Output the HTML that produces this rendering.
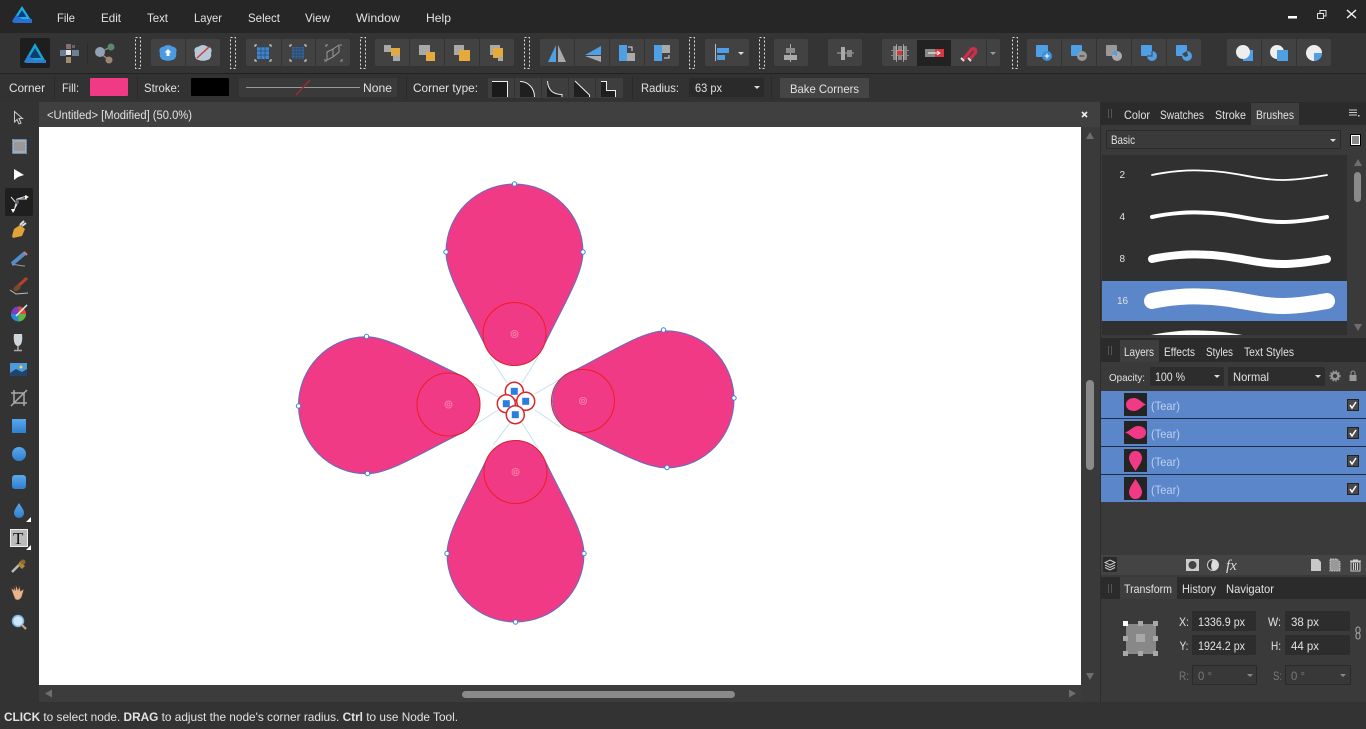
<!DOCTYPE html>
<html><head><meta charset="utf-8"><title>Affinity Designer</title>
<style>
html,body{margin:0;padding:0;width:1366px;height:729px;overflow:hidden;background:#333}
svg{display:block}
text{font-family:"Liberation Sans",sans-serif;font-size:12px;fill:#e2e2e2}
.b{fill:#424242}
.d{stroke:#333;stroke-width:1}
.g{fill:none;stroke:#ddd;stroke-width:1;stroke-dasharray:2 2}
</style></head><body>
<svg width="1366" height="729" viewBox="0 0 1366 729" xmlns="http://www.w3.org/2000/svg">
<defs>
<path id="petal" d="M514.500 184C552 184 583 214 583 252C583 274 565 302 542.700 348A31.500 31.500 0 0 1 486.300 348C464 302 446 274 446 252C446 214 477 184 514.500 184Z"/>
<linearGradient id="bl" x1="0" y1="0" x2="0" y2="1"><stop offset="0" stop-color="#5aa8ea"/><stop offset="1" stop-color="#2f7fd0"/></linearGradient>
</defs>

<!-- backgrounds -->
<rect width="1366" height="729" fill="#333"/>
<rect width="1366" height="33" fill="#262626"/>
<rect y="33" width="1366" height="41" fill="#343434"/>
<rect y="73" width="1366" height="1" fill="#222"/>
<rect y="74" width="1366" height="27" fill="#323232"/>
<rect x="0" y="101" width="39" height="601" fill="#333"/>
<rect x="39" y="102" width="1061" height="25" fill="#404040"/>
<rect x="39" y="127" width="1042" height="558" fill="#fff"/>
<rect x="39" y="685" width="1042" height="17" fill="#3c3c3c"/>
<rect x="1081" y="127" width="19" height="575" fill="#3a3a3a"/>
<rect x="1100" y="102" width="266" height="600" fill="#3a3a3a"/>

<!-- menu -->
<path d="M22 6L31 20H13Z" fill="#18b4e4"/><path d="M22 10L17.500 17H26.500Z" fill="#0d3a80"/><path d="M12 21L16 15L22 19H32V23H14Z" fill="#2a6fd6"/>
<text x="57" y="22" textLength="18" lengthAdjust="spacingAndGlyphs">File</text>
<text x="101" y="22" textLength="20" lengthAdjust="spacingAndGlyphs">Edit</text>
<text x="147" y="22" textLength="21" lengthAdjust="spacingAndGlyphs">Text</text>
<text x="194" y="22" textLength="28" lengthAdjust="spacingAndGlyphs">Layer</text>
<text x="248" y="22" textLength="32" lengthAdjust="spacingAndGlyphs">Select</text>
<text x="305" y="22" textLength="25" lengthAdjust="spacingAndGlyphs">View</text>
<text x="356" y="22" textLength="44" lengthAdjust="spacingAndGlyphs">Window</text>
<text x="426" y="22" textLength="25" lengthAdjust="spacingAndGlyphs">Help</text>
<rect x="1288" y="16" width="9" height="2.500" fill="#fff"/>
<path d="M1317.500 13.500h6v5h-6zM1320 13V10.500h6V16h-2.500" fill="none" stroke="#ddd"/>
<path d="M1347 10L1356 18M1356 10L1347 18" stroke="#eee" stroke-width="1.500"/>

<!-- toolbar: persona -->
<rect x="20" y="38" width="30" height="30" rx="2" fill="#1e1e1e"/>
<path d="M35 43L46 62H24Z" fill="#14a5d6"/><path d="M35 48L29 58H41Z" fill="#0e3c6e"/><path d="M24 62L28 55L34 60H46V63H26Z" fill="#2d7dd0"/>
<g fill="#8a8a8a"><rect x="60" y="50" width="6" height="6" fill="#6b7f95"/><rect x="72" y="50" width="7" height="6" fill="#6b7f95"/><rect x="66" y="44" width="5" height="5" fill="#8a6a78"/><rect x="66" y="50" width="5" height="5" fill="#e8e8e8"/><rect x="66" y="57" width="5" height="6" fill="#a08a70"/><rect x="72" y="45" width="3" height="3" fill="#666"/></g>
<rect x="87" y="43" width="1" height="21" fill="#2a2a2a"/>
<path d="M100 52L111 47M100 53L109 60" stroke="#888" stroke-width="1.500"/><circle cx="100" cy="52" r="5" fill="#8fa3b5"/><circle cx="111" cy="47" r="3.500" fill="#5a8a6a"/><circle cx="109" cy="60" r="3.500" fill="#9a8672"/>

<!-- grabbers -->
<rect x="135.500" y="37.500" width="5" height="31" class="g"/>
<rect x="230.500" y="37.500" width="5" height="31" class="g"/>
<rect x="360.500" y="37.500" width="5" height="31" class="g"/>
<rect x="524.500" y="37.500" width="5" height="31" class="g"/>
<rect x="689.500" y="37.500" width="5" height="31" class="g"/>
<rect x="759.500" y="37.500" width="5" height="31" class="g"/>
<rect x="1012.500" y="37.500" width="5" height="31" class="g"/>

<!-- groups -->
<rect x="151" y="39" width="69" height="27" rx="2" class="b"/>
<rect x="246" y="39" width="104" height="27" rx="2" class="b"/>
<rect x="375" y="39" width="139" height="27" rx="2" class="b"/>
<rect x="540" y="39" width="139" height="27" rx="2" class="b"/>
<rect x="705" y="39" width="44" height="27" rx="2" class="b"/>
<rect x="774" y="39" width="34" height="27" rx="2" class="b"/>
<rect x="828" y="39" width="34" height="27" rx="2" class="b"/>
<rect x="882" y="39" width="118" height="27" rx="2" class="b"/>
<rect x="917" y="40" width="34" height="26" fill="#222"/>
<rect x="1027" y="39" width="174" height="27" rx="2" class="b"/>
<rect x="1227" y="39" width="104" height="27" rx="2" class="b"/>
<path class="d" d="M185.500 39v27M281.500 39v27M315.500 39v27M409.500 39v27M444.500 39v27M479.500 39v27M574.500 39v27M609.500 39v27M644.500 39v27M986.500 39v27M1061.500 39v27M1096.500 39v27M1131.500 39v27M1166.500 39v27M1261.500 39v27M1296.500 39v27"/>

<!-- group 1 -->
<path d="M168 45C171 45 172 47 174 47C177 48 177 51 176 53C177 56 175 60 172 60C170 61 166 61 164 60C161 60 159 56 160 53C159 51 159 48 162 47C164 47 165 45 168 45Z" fill="#4a9be0"/><path d="M168 49L171.500 52.500H169.500V56H166.500V52.500H164.500Z" fill="#fff"/>
<path d="M203 45C206 45 207 47 209 47C212 48 212 51 211 53C212 56 210 60 207 60C205 61 201 61 199 60C196 60 194 56 195 53C194 51 194 48 197 47C199 47 200 45 203 45Z" fill="#b9c8d8"/><path d="M197 58L209 47" stroke="#d23b3b" stroke-width="1.500"/>

<!-- group 2 -->
<rect x="257" y="47" width="12" height="12" fill="#3f86cf"/>
<path d="M257 47h12M257 51h12M257 55h12M261 47v12M265 47v12" stroke="#2b4b70" stroke-width="0.700"/>
<path d="M255 47v-2h2M269 45h2v2M271 59v2h-2M257 61h-2v-2" stroke="#ddd" fill="none"/>
<rect x="292" y="47" width="12" height="12" fill="#36679c"/>
<path d="M292 49h12M292 52h12M292 55h12M292 58h12M295 47v12M298 47v12M301 47v12" stroke="#2a4058" stroke-width="0.700"/>
<path d="M290 47v-2h2M304 45h2v2M306 59v2h-2M292 61h-2v-2" stroke="#ddd" fill="none"/>
<path d="M327 52l6-3v8l-6 3zM333 49l6-4v7l-6 5M326 47v-2h2M340 45h2M342 59v2h-2M327 61h-2v-2" fill="none" stroke="#999"/>

<!-- group 3 -->
<rect x="384" y="45" width="7" height="7" fill="#a9a9a9"/><rect x="391" y="48" width="9" height="8" fill="#e6a93c"/><rect x="393" y="55" width="7" height="6" fill="#a9a9a9"/>
<rect x="419" y="45" width="11" height="10" fill="#a9a9a9"/><rect x="426" y="52" width="9" height="9" fill="#e6a93c"/>
<rect x="454" y="45" width="10" height="10" fill="#a9a9a9"/><rect x="459" y="50" width="11" height="11" fill="#e6a93c"/>
<rect x="490" y="45" width="10" height="10" fill="#a9a9a9"/><rect x="493" y="48" width="10" height="10" fill="#e6a93c"/><rect x="498" y="57" width="5" height="4" fill="#a9a9a9"/>

<!-- group 4 -->
<path d="M556 45V62H548Z" fill="#4f9fe6"/><path d="M558 45V62H566Z" fill="#aaa"/>
<path d="M601 46V55H585Z" fill="#4f9fe6"/><path d="M601 56V62L585 56Z" fill="#aaa"/>
<rect x="619" y="45" width="8" height="16" fill="#4f9fe6"/><rect x="627" y="53" width="8" height="8" fill="#aaa"/><path d="M628 47h4v4" fill="none" stroke="#ddd"/>
<rect x="654" y="45" width="8" height="16" fill="#4f9fe6"/><rect x="662" y="45" width="8" height="8" fill="#aaa"/><path d="M669 55v3h-5" fill="none" stroke="#ddd"/>

<!-- group 5-7 -->
<path d="M715.500 44v17" stroke="#bbb"/><rect x="717" y="48" width="12" height="5" fill="#4f9fe6"/><rect x="717" y="55" width="8" height="5" fill="#4f9fe6"/>
<path d="M738 52h6l-3 3z" fill="#ddd"/>
<path d="M790.500 44v18" stroke="#aaa"/><rect x="786" y="48" width="9" height="5" fill="#8a8a8a"/><rect x="784" y="55" width="13" height="5" fill="#aaa"/>
<path d="M837 53h17" stroke="#aaa"/><rect x="841" y="47" width="4" height="13" fill="#aaa"/><rect x="847" y="50" width="5" height="7" fill="#8a8a8a"/>

<!-- group 8 -->
<g fill="#888"><rect x="893" y="46" width="4" height="4"/><rect x="898" y="46" width="4" height="4"/><rect x="903" y="46" width="4" height="4"/><rect x="893" y="51" width="4" height="4"/><rect x="903" y="51" width="4" height="4"/><rect x="893" y="56" width="4" height="4"/><rect x="898" y="56" width="4" height="4"/><rect x="903" y="56" width="4" height="4"/></g>
<rect x="897" y="50" width="5" height="5" fill="#d23b3b"/>
<path d="M891 50.500h18M891 55.500h18M896.500 44v18M903.500 44v18" stroke="#ccc" stroke-width="0.600"/>
<rect x="925" y="49" width="10" height="8" fill="#888"/><rect x="935" y="49" width="9" height="8" fill="#e0343f"/><path d="M928 53h11M937 51l3 2-3 2" fill="none" stroke="#fff"/>
<path d="M963 60L971 50C974 47 977 50 975 53L969 60" fill="none" stroke="#c8304a" stroke-width="3.500"/>
<path d="M961 58l3 3M968 58l3 3" stroke="#ddd" stroke-width="2"/>
<path d="M990 52h6l-3 3z" fill="#999"/>

<!-- group 9 -->
<rect x="1036" y="45" width="12" height="12" rx="1" fill="#4f9fe6"/><circle cx="1047" cy="56" r="5" fill="#3d8fd8"/><path d="M1044.500 56h5M1047 53.500v5" stroke="#fff"/>
<rect x="1071" y="45" width="11" height="11" rx="1" fill="#4f9fe6"/><circle cx="1082" cy="56" r="5" fill="#999"/><path d="M1079.500 56h5" stroke="#333"/>
<rect x="1106" y="45" width="11" height="11" rx="1" fill="#999"/><circle cx="1117" cy="56" r="5" fill="#aaa"/><path d="M1112 54A5 5 0 0 1 1117 51V56H1117Z" fill="#4f9fe6"/>
<rect x="1141" y="45" width="11" height="11" rx="1" fill="#4f9fe6"/><circle cx="1152" cy="56" r="5" fill="#4f9fe6"/><path d="M1147 56h5v-5" fill="none" stroke="#444"/>
<rect x="1176" y="45" width="11" height="11" rx="1" fill="#4f9fe6"/><circle cx="1187" cy="56" r="5" fill="#4f9fe6"/><path d="M1182 54l5-3 1 5-3 1z" fill="#444"/>

<!-- group 10 -->
<rect x="1243" y="50" width="10" height="11" fill="#4f9fe6"/><circle cx="1243" cy="52" r="7" fill="#eee"/>
<circle cx="1277" cy="52" r="7" fill="#eee"/><rect x="1277" y="50" width="11" height="11" fill="#4f9fe6"/>
<circle cx="1314" cy="53" r="8" fill="#eee"/><path d="M1314 53h8A8 8 0 0 1 1314 61Z" fill="#4f9fe6"/>

<!-- context bar -->
<text x="9" y="92" textLength="36" lengthAdjust="spacingAndGlyphs">Corner</text>
<rect x="54" y="76" width="1" height="23" fill="#2a2a2a"/>
<text x="62" y="92" textLength="17" lengthAdjust="spacingAndGlyphs">Fill:</text>
<rect x="90" y="78" width="38" height="18" rx="1" fill="#f13a86"/>
<rect x="137" y="76" width="1" height="23" fill="#2a2a2a"/>
<text x="144" y="92" textLength="36" lengthAdjust="spacingAndGlyphs">Stroke:</text>
<rect x="191" y="78" width="38" height="18" rx="1" fill="#000"/>
<rect x="239" y="78" width="158" height="19" rx="1" fill="#3a3a3a"/>
<path d="M246 87.500H360" stroke="#999"/><path d="M296 95L310 80" stroke="#9c2a33" stroke-width="1.500"/>
<text x="363" y="92" textLength="29" lengthAdjust="spacingAndGlyphs">None</text>
<rect x="406" y="76" width="1" height="23" fill="#2a2a2a"/>
<text x="413" y="92" textLength="65" lengthAdjust="spacingAndGlyphs">Corner type:</text>
<rect x="488" y="78" width="135" height="20" fill="#3e3e3e"/>
<path d="M514.500 78v20M541.500 78v20M568.500 78v20M595.500 78v20" stroke="#333"/>
<path d="M492 81H507V97H492Z" fill="#1a1a1a"/><path d="M492 81.500H507.500V97" fill="none" stroke="#eee"/>
<path d="M520 81C528 81 534 88 534 97H520Z" fill="#1f1f1f"/><path d="M520 81.500C528 81.500 534.500 88 534.500 97" fill="none" stroke="#eee"/>
<path d="M547 81C548 90 553 95 562 95V97H547Z" fill="#1f1f1f"/><path d="M547.500 81C548 90 553 94.500 562 94.500V97" fill="none" stroke="#eee"/>
<path d="M574 81L589 95V97H574Z" fill="#1f1f1f"/><path d="M575 81L589.500 95V97" fill="none" stroke="#eee"/>
<path d="M601 81H606V90H616V97H601Z" fill="#1f1f1f"/><path d="M601 81.500H606.500V90.500H615.500V97" fill="none" stroke="#eee"/>
<rect x="632" y="76" width="1" height="23" fill="#2a2a2a"/>
<text x="641" y="92" textLength="38" lengthAdjust="spacingAndGlyphs">Radius:</text>
<rect x="689" y="78" width="75" height="19" rx="1" fill="#2a2a2a"/>
<text x="695" y="92" textLength="27" lengthAdjust="spacingAndGlyphs">63 px</text>
<path d="M754 86h6l-3 3z" fill="#ddd"/>
<rect x="771" y="76" width="1" height="23" fill="#2a2a2a"/>
<rect x="780" y="78" width="89" height="20" rx="1" fill="#454545"/>
<text x="790" y="93" textLength="69" lengthAdjust="spacingAndGlyphs">Bake Corners</text>

<!-- doc tab -->
<text x="47" y="119" textLength="145" lengthAdjust="spacingAndGlyphs" style="font-size:11.500px">&lt;Untitled&gt; [Modified] (50.0%)</text>
<path d="M1082 112l5 5M1087 112l-5 5" stroke="#eee" stroke-width="1.600"/>

<!-- canvas -->
<g fill="#f13a86" stroke="#5f6fc4" stroke-width="1">
<use href="#petal"/>
<use href="#petal" transform="translate(1 806) scale(1 -1)"/>
<use href="#petal" transform="translate(298.500 406) rotate(-90.600) translate(-514.500 -184)"/>
<use href="#petal" transform="translate(734 398) rotate(88.860) translate(-514.500 -184)"/>
</g>
<path d="M490 357L507 383M538 357L522 383M473 383L498 397M473 426L498 410M562 378L535 394M560 427L535 410M493 445L510 423M538 448L522 423" stroke="#c5dff2" stroke-width="1" fill="none"/>
<g fill="none" stroke="#ee1c25" stroke-width="1">
<circle cx="514.500" cy="334" r="31.500"/><circle cx="515.500" cy="472" r="31.500"/><circle cx="448.500" cy="404.500" r="31.500"/><circle cx="583" cy="401" r="31.500"/>
</g>
<g fill="none" stroke="#f77ba8" stroke-width="1">
<circle cx="514.500" cy="334" r="3.500"/><circle cx="515.500" cy="472" r="3.500"/><circle cx="448.500" cy="404.500" r="3.500"/><circle cx="583" cy="401" r="3.500"/>
<circle cx="514.500" cy="334" r="1.500"/><circle cx="515.500" cy="472" r="1.500"/><circle cx="448.500" cy="404.500" r="1.500"/><circle cx="583" cy="401" r="1.500"/>
</g>
<g fill="#fff" stroke="#d9252d" stroke-width="1.500">
<circle cx="514.300" cy="391.300" r="9"/><circle cx="525.700" cy="401.300" r="9"/><circle cx="506.300" cy="403.700" r="9"/><circle cx="515.300" cy="414.700" r="9"/>
</g>
<g fill="#2a7de1">
<rect x="510.800" y="387.800" width="7" height="7"/><rect x="522.200" y="397.800" width="7" height="7"/><rect x="502.800" y="400.200" width="7" height="7"/><rect x="511.800" y="411.200" width="7" height="7"/>
</g>
<g fill="#fff" stroke="#3b82d6" stroke-width="1">
<circle cx="514.500" cy="184" r="2.200"/><circle cx="446" cy="252" r="2.200"/><circle cx="583" cy="252" r="2.200"/>
<circle cx="298.500" cy="406" r="2.200"/><circle cx="366.500" cy="336.500" r="2.200"/><circle cx="367.500" cy="473.500" r="2.200"/>
<circle cx="734" cy="398" r="2.200"/><circle cx="663.500" cy="330" r="2.200"/><circle cx="667" cy="467.500" r="2.200"/>
<circle cx="515.500" cy="622" r="2.200"/><circle cx="447" cy="553.500" r="2.200"/><circle cx="584" cy="553.500" r="2.200"/>
</g>

<!-- canvas scrollbars -->
<rect x="462" y="691" width="273" height="7" rx="3.500" fill="#8a8a8a"/>
<path d="M45 693.500l7-4v8zM1076 693.500l-7-4v8z" fill="#6e6e6e"/>
<rect x="1086" y="380" width="8" height="90" rx="4" fill="#8a8a8a"/>
<path d="M1090 132l4 7h-8zM1090 680l4-7h-8z" fill="#6e6e6e"/>

<!-- tools -->
<path d="M14.500 111.500V122L17 119.500L19 124L21 123L19 118.500H22.500Z" fill="#333" stroke="#ccc"/>
<rect x="12.500" y="139.500" width="14" height="14" fill="#aaa" stroke="#5a9bd8" stroke-dasharray="2 1"/><rect x="14" y="142" width="11" height="9" fill="#999"/>
<path d="M14 169V180L18 177L24 175Z" fill="#fff"/>
<rect x="5" y="188" width="28" height="28" rx="2" fill="#1f1f1f"/>
<path d="M11 197L17 204M27 196L17 199L14 211M17 204L13 212M17 199H27" stroke="#ddd" fill="none"/><circle cx="17" cy="202" r="2" fill="#667"/><path d="M25 195l4 2-4 2zM11 209l4 0-2 4z" fill="#fff"/>
<path d="M12 236L14 229L20 225L25 229L22 236L13 238Z" fill="#e2a23a"/><path d="M20 225L24 221M22 226L26 223" stroke="#ddd" stroke-width="2"/>
<path d="M12 264L25 253" stroke="#4f8fd0" stroke-width="4"/><path d="M24 252l3 3" stroke="#d97a7a" stroke-width="2"/><path d="M12 265C17 264 20 266 25 266" stroke="#999" fill="none"/>
<path d="M16 288L27 278" stroke="#b8412e" stroke-width="3"/><path d="M10 290L16 294L28 293" stroke="#bbb" fill="none"/><ellipse cx="17" cy="288" rx="4" ry="2.500" fill="#7a4a2a" transform="rotate(-35 17 288)"/>
<circle cx="18.500" cy="314" r="7.500" fill="#7a3fc0"/><path d="M18.500 314L18.500 306.500A7.500 7.500 0 0 1 26 314Z" fill="#e04a3a"/><path d="M18.500 314H26A7.500 7.500 0 0 1 18.500 321.500Z" fill="#5fb83a"/><path d="M18.500 314V321.500A7.500 7.500 0 0 1 11 314Z" fill="#2a8ad0"/><path d="M16 316L27 305" stroke="#eee" stroke-width="1.500"/>
<path d="M14 334H22C23 342 21 346 18 346C15 346 13 342 14 334Z" fill="#cfd5da"/><path d="M18 346V350M14 350.500H22" stroke="#aaa" stroke-width="1.500"/>
<rect x="10" y="363" width="17" height="13" fill="#4f9ad8"/><path d="M10 373L16 369L22 372L27 369V376H10Z" fill="#20446e"/><circle cx="21" cy="367" r="1.500" fill="#f2d45a"/>
<path d="M14 390V403H27M11 393H24V406M11 406L27 390" fill="none" stroke="#aaa" stroke-width="1.500"/>
<rect x="12" y="419" width="14" height="14" fill="url(#bl)"/>
<circle cx="19" cy="454" r="7" fill="url(#bl)"/>
<rect x="12" y="475" width="14" height="14" rx="3" fill="url(#bl)"/>
<path d="M19 503C22 508 24 510 24 513A5 5 0 0 1 14 513C14 510 16 508 19 503Z" fill="url(#bl)"/>
<path d="M26 522h5v-5zM26 550h5v-5z" fill="#fff"/>
<rect x="10.500" y="529.500" width="17" height="17" fill="#bbb" stroke="#eee"/>
<text x="13" y="544" style="font-family:'Liberation Serif',serif;font-size:17px;fill:#111">T</text>
<path d="M12 572L21 563" stroke="#bbb" stroke-width="2.500"/><path d="M20 561L25 566L22 569L18 565Z" fill="#b08838"/><circle cx="23" cy="562" r="2.500" fill="#8a6a30"/>
<path d="M13 594L11 588L14 590L13.500 586L15.500 590L16 585L18 590L19.500 586L20.500 591L24 589L22 596C21 600 17 601 15 599Z" fill="#e7b48d" stroke="#5a4030" stroke-width="0.600"/>
<circle cx="18" cy="621" r="5.500" fill="#cfe6fa" stroke="#7fb5e0" stroke-width="1.500"/><path d="M22 625l4 4" stroke="#c9a77a" stroke-width="2.200"/>

<!-- panel 1 -->
<rect x="1101" y="102" width="265" height="23" fill="#2b2b2b"/>
<rect x="1251" y="103" width="48" height="22" fill="#3e3e3e"/>
<path d="M1108.500 109v9M1111.500 109v9" stroke="#555"/>
<text x="1124" y="119" textLength="26" lengthAdjust="spacingAndGlyphs">Color</text>
<text x="1160" y="119" textLength="44" lengthAdjust="spacingAndGlyphs">Swatches</text>
<text x="1215" y="119" textLength="31" lengthAdjust="spacingAndGlyphs">Stroke</text>
<text x="1256" y="119" textLength="38" lengthAdjust="spacingAndGlyphs">Brushes</text>
<path d="M1349 110h8M1349 112.500h8M1349 115h8" stroke="#ccc"/><rect x="1358" y="115" width="1.500" height="1.500" fill="#ccc"/>
<rect x="1106.500" y="130.500" width="234" height="18" rx="1" fill="#3a3a3a" stroke="#2a2a2a"/>
<text x="1111" y="144" textLength="24" lengthAdjust="spacingAndGlyphs">Basic</text>
<path d="M1330 139h6l-3 3z" fill="#ddd"/>
<rect x="1350.500" y="134.500" width="10" height="11" fill="#fff" stroke="#000"/><path d="M1352 137h7M1352 139h7M1352 141h7M1352 143h7" stroke="#111"/>
<rect x="1102" y="155" width="245" height="180" fill="#303030"/>
<rect x="1102" y="281" width="245" height="40" fill="#5b86c9"/>
<text x="1119.500" y="178" style="font-size:10px">2</text>
<text x="1119.500" y="220" style="font-size:10px">4</text>
<text x="1119.500" y="262" style="font-size:10px">8</text>
<text x="1117" y="304" style="font-size:10px">16</text>
<g fill="none" stroke="#fff" stroke-linecap="round">
<path transform="translate(0 175)" d="M1152 0C1170 -4 1190 -5 1200 -4.500C1235 -4 1255 5 1283 5C1300 5 1315 2 1327 0" stroke-width="1.800"/>
<path transform="translate(0 217)" d="M1152 0C1170 -4 1190 -5 1200 -4.500C1235 -4 1255 5 1283 5C1300 5 1315 2 1327 0" stroke-width="4"/>
<path transform="translate(0 259)" d="M1152 0C1170 -4 1190 -5 1200 -4.500C1235 -4 1255 5 1283 5C1300 5 1315 2 1327 0" stroke-width="8"/>
<path transform="translate(0 301)" d="M1152 0C1170 -4 1190 -5 1200 -4.500C1235 -4 1255 5 1283 5C1300 5 1315 2 1327 0" stroke-width="16"/>
</g>
<svg x="1102" y="321" width="245" height="14"><path transform="translate(-1102 22)" d="M1152 0C1170 -4 1190 -5 1200 -4.500C1235 -4 1255 5 1283 5C1300 5 1315 2 1327 0" fill="none" stroke="#fff" stroke-width="16" stroke-linecap="round"/></svg>
<rect x="1354" y="172" width="7" height="30" rx="3.500" fill="#8a8a8a"/>
<path d="M1358 159l4 7h-8zM1358 331l4-7h-8z" fill="#6e6e6e"/>

<!-- panel 2 -->
<rect x="1101" y="338" width="265" height="24" fill="#2b2b2b"/>
<rect x="1120" y="340" width="39" height="22" fill="#3e3e3e"/>
<path d="M1108.500 346v9M1111.500 346v9" stroke="#555"/>
<text x="1124" y="356" textLength="30" lengthAdjust="spacingAndGlyphs">Layers</text>
<text x="1164" y="356" textLength="31" lengthAdjust="spacingAndGlyphs">Effects</text>
<text x="1206" y="356" textLength="27" lengthAdjust="spacingAndGlyphs">Styles</text>
<text x="1244" y="356" textLength="50" lengthAdjust="spacingAndGlyphs">Text Styles</text>
<text x="1109" y="381" textLength="36" lengthAdjust="spacingAndGlyphs" style="font-size:10.500px">Opacity:</text>
<rect x="1150" y="367" width="74" height="19" rx="1" fill="#2d2d2d"/>
<text x="1155" y="381" textLength="30" lengthAdjust="spacingAndGlyphs">100 %</text>
<path d="M1214 375h6l-3 3z" fill="#ddd"/>
<rect x="1228" y="367" width="97" height="19" rx="1" fill="#2d2d2d"/>
<text x="1233" y="381" textLength="36" lengthAdjust="spacingAndGlyphs">Normal</text>
<path d="M1315 375h6l-3 3z" fill="#ddd"/>
<circle cx="1335" cy="376" r="3.300" fill="none" stroke="#999" stroke-width="2.200"/><circle cx="1335" cy="376" r="5" fill="none" stroke="#999" stroke-width="1.200" stroke-dasharray="1.500 1.500"/>
<rect x="1349.500" y="375" width="7" height="6" fill="#999"/><path d="M1351 375V373A2 2 0 0 1 1355 373V375" fill="none" stroke="#999"/>
<rect x="1101" y="391" width="265" height="111" fill="#5b86c9"/>
<path d="M1101 418.500h265M1101 446.500h265M1101 474.500h265" stroke="#1e2c44"/>
<rect x="1124" y="393" width="23" height="23" fill="#242424"/><rect x="1124" y="421" width="23" height="23" fill="#242424"/><rect x="1124" y="449" width="23" height="23" fill="#242424"/><rect x="1124" y="477" width="23" height="23" fill="#242424"/>
<g fill="#f13a86">
<path d="M1126 404.500C1126 400 1130 398 1134 398C1139 398 1142 403 1146 404.500C1142 406 1139 411 1134 411C1130 411 1126 409 1126 404.500Z"/>
<path d="M1146 432.500C1146 428 1142 426 1138 426C1133 426 1130 431 1125 432.500C1130 434 1133 439 1138 439C1142 439 1146 437 1146 432.500Z"/>
<path d="M1135.500 451C1131 451 1129 455 1129 458C1129 462 1133 467 1135.500 471C1138 467 1142 462 1142 458C1142 455 1140 451 1135.500 451Z"/>
<path d="M1135.500 499C1131 499 1129 495 1129 492C1129 488 1133 483 1135.500 479C1138 483 1142 488 1142 492C1142 495 1140 499 1135.500 499Z"/>
</g>
<text x="1151" y="410" textLength="29" lengthAdjust="spacingAndGlyphs" style="fill:#bcd0f0">(Tear)</text><text x="1151" y="438" textLength="29" lengthAdjust="spacingAndGlyphs" style="fill:#bcd0f0">(Tear)</text><text x="1151" y="466" textLength="29" lengthAdjust="spacingAndGlyphs" style="fill:#bcd0f0">(Tear)</text><text x="1151" y="494" textLength="29" lengthAdjust="spacingAndGlyphs" style="fill:#bcd0f0">(Tear)</text>
<g fill="#4a4a4a" stroke="#222"><rect x="1347.500" y="399.500" width="11" height="11"/><rect x="1347.500" y="427.500" width="11" height="11"/><rect x="1347.500" y="455.500" width="11" height="11"/><rect x="1347.500" y="483.500" width="11" height="11"/></g>
<path d="M1350 405l2 3 4-6M1350 433l2 3 4-6M1350 461l2 3 4-6M1350 489l2 3 4-6" fill="none" stroke="#fff" stroke-width="1.500"/>
<rect x="1101" y="555" width="265" height="20" fill="#444"/>
<rect x="1103" y="557" width="14" height="15" fill="#2b2b2b"/><path d="M1110 560l5 2.500-5 2.500-5-2.500zM1105 565l5 2.500 5-2.500M1105 567.500l5 2.500 5-2.500" fill="none" stroke="#ccc"/>
<rect x="1186" y="559" width="13" height="12" fill="#ccc"/><circle cx="1192.500" cy="565" r="4" fill="#444"/>
<circle cx="1213" cy="565" r="5.500" fill="#333" stroke="#ccc"/><path d="M1213 559.500A5.500 5.500 0 0 1 1213 570.500C1210 568 1211 563 1213 559.500Z" fill="#ddd"/>
<text x="1226" y="570" style="font-family:'Liberation Serif',serif;font-style:italic;font-size:15px;fill:#ddd">fx</text>
<path d="M1311 559H1318L1321 562V571H1311Z" fill="#c8c8c8"/>
<path d="M1330 559H1337L1340 562V571H1330Z" fill="#999" stroke="#ccc" stroke-dasharray="1.500 1"/>
<rect x="1351" y="562" width="9" height="9" fill="none" stroke="#ccc"/><path d="M1350 561H1361M1353 560H1358M1353.500 563v7M1355.500 563v7M1357.500 563v7" stroke="#ccc"/>

<!-- panel 3 -->
<rect x="1101" y="577" width="265" height="22" fill="#2b2b2b"/>
<rect x="1120" y="577" width="57" height="22" fill="#3e3e3e"/>
<path d="M1108.500 584v9M1111.500 584v9" stroke="#555"/>
<text x="1124" y="593" textLength="48" lengthAdjust="spacingAndGlyphs">Transform</text>
<text x="1182" y="593" textLength="34" lengthAdjust="spacingAndGlyphs">History</text>
<text x="1226" y="593" textLength="48" lengthAdjust="spacingAndGlyphs">Navigator</text>
<rect x="1126" y="624" width="30" height="30" fill="#888"/>
<g fill="#a8a8a8"><rect x="1123" y="621" width="5" height="5" fill="#fff"/><rect x="1138" y="621" width="5" height="5"/><rect x="1153" y="621" width="5" height="5"/><rect x="1123" y="636" width="5" height="5"/><rect x="1136" y="634" width="9" height="8"/><rect x="1153" y="636" width="5" height="5"/><rect x="1123" y="651" width="5" height="5"/><rect x="1138" y="651" width="5" height="5"/><rect x="1153" y="651" width="5" height="5"/></g>
<rect x="1192" y="611" width="64" height="20" rx="1" fill="#2d2d2d"/><rect x="1192" y="635" width="64" height="20" rx="1" fill="#2d2d2d"/>
<rect x="1285" y="611" width="65" height="20" rx="1" fill="#2d2d2d"/><rect x="1285" y="635" width="65" height="20" rx="1" fill="#2d2d2d"/>
<text x="1179" y="626" textLength="10" lengthAdjust="spacingAndGlyphs">X:</text><text x="1179.500" y="650" textLength="9" lengthAdjust="spacingAndGlyphs">Y:</text>
<text x="1268" y="626" textLength="13" lengthAdjust="spacingAndGlyphs">W:</text><text x="1271" y="650" textLength="10" lengthAdjust="spacingAndGlyphs">H:</text>
<text x="1198" y="626" textLength="47" lengthAdjust="spacingAndGlyphs">1336.9 px</text><text x="1198" y="650" textLength="47" lengthAdjust="spacingAndGlyphs">1924.2 px</text>
<text x="1291" y="626" textLength="28" lengthAdjust="spacingAndGlyphs">38 px</text><text x="1291" y="650" textLength="28" lengthAdjust="spacingAndGlyphs">44 px</text>
<rect x="1356" y="627" width="4" height="6" rx="2" fill="none" stroke="#aaa"/><rect x="1356" y="633" width="4" height="6" rx="2" fill="none" stroke="#aaa"/>
<rect x="1192.500" y="665.500" width="64" height="19" rx="1" fill="#383838" stroke="#2a2a2a"/><rect x="1285.500" y="665.500" width="65" height="19" rx="1" fill="#383838" stroke="#2a2a2a"/>
<text x="1179" y="680" textLength="10" lengthAdjust="spacingAndGlyphs" style="fill:#777">R:</text><text x="1273" y="680" textLength="9" lengthAdjust="spacingAndGlyphs" style="fill:#777">S:</text>
<text x="1198" y="680" textLength="14" lengthAdjust="spacingAndGlyphs" style="fill:#777">0 °</text><text x="1291" y="680" textLength="14" lengthAdjust="spacingAndGlyphs" style="fill:#777">0 °</text>
<path d="M1247 674h6l-3 3zM1340 674h6l-3 3z" fill="#888"/>

<!-- dividers/status -->
<rect x="1100" y="102" width="1" height="600" fill="#2d2d2d"/>
<rect x="0" y="702" width="1366" height="27" fill="#333"/>
<text x="4" y="721" textLength="454" lengthAdjust="spacingAndGlyphs"><tspan style="font-weight:bold">CLICK</tspan> to select node. <tspan style="font-weight:bold">DRAG</tspan> to adjust the node's corner radius. <tspan style="font-weight:bold">Ctrl</tspan> to use Node Tool.</text>
</svg>
</body></html>
